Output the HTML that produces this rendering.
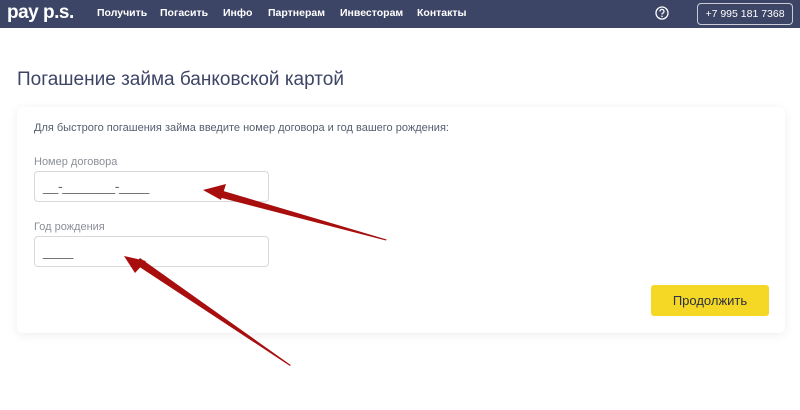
<!DOCTYPE html>
<html><head><meta charset="utf-8"><style>
body{margin:0;width:800px;height:410px;background:#fff;font-family:"Liberation Sans",sans-serif;position:relative;overflow:hidden}
.hdr{position:absolute;left:0;top:0;width:800px;height:28px;background:#3d4566}
.hdr span{position:absolute;top:7px;color:#fff;font-size:10.5px;font-weight:bold}
.logo{position:absolute;left:7px;top:2px;color:#fff;font-size:19px;font-weight:bold;letter-spacing:-0.5px}
.phone{position:absolute;left:697px;top:3px;width:94px;height:20px;border:1px solid #c9cbd6;border-radius:4px;color:#fff;font-size:10.5px;text-align:center;line-height:20px}
h1{position:absolute;left:17px;top:69px;margin:0;font-size:19px;font-weight:normal;color:#3d4566}
.card{position:absolute;left:17px;top:107px;width:768px;height:226px;background:#fff;border-radius:6px;box-shadow:0 2px 10px rgba(0,0,0,.07)}
.t{position:absolute;font-size:11px;color:#555d6e}
.l{position:absolute;font-size:11px;color:#8c8f98}
.inp{position:absolute;left:34px;width:235px;height:31px;border:1px solid #d8d8d8;border-radius:4px;color:#666;font-size:14px;line-height:28px;padding-left:8px;box-sizing:border-box;letter-spacing:-0.3px}
.btn{position:absolute;left:651px;top:285px;width:118px;height:31px;background:#f5d825;border-radius:3px;text-align:center;line-height:31px;font-size:13px;color:#2d3140}
</style></head><body>
<div class="hdr">
<div class="logo">pay p.s.</div>
<span style="left:97px">Получить</span>
<span style="left:160px">Погасить</span>
<span style="left:223px">Инфо</span>
<span style="left:268px">Партнерам</span>
<span style="left:340px">Инвесторам</span>
<span style="left:417px">Контакты</span>
<svg style="position:absolute;left:655px;top:6px" width="14" height="14" viewBox="0 0 14 14"><circle cx="7" cy="7" r="6" fill="none" stroke="#fff" stroke-width="1.3"/><path d="M5 5.5a2 2 0 1 1 2.5 1.8c-.5.2-.5.6-.5 1.2" fill="none" stroke="#fff" stroke-width="1.3"/><circle cx="7" cy="10.3" r=".8" fill="#fff"/></svg>
<div class="phone">+7 995 181 7368</div>
</div>
<h1>Погашение займа банковской картой</h1>
<div class="card"></div>
<div class="t" style="left:34px;top:122px">Для быстрого погашения займа введите номер договора и год вашего рождения:</div>
<div class="l" style="left:34px;top:156px">Номер договора</div>
<div class="inp" style="top:171px">__-_______-____</div>
<div class="l" style="left:34px;top:221px">Год рождения</div>
<div class="inp" style="top:236px">____</div>
<div class="btn">Продолжить</div>
<svg style="position:absolute;left:0;top:0" width="800" height="410">
<path d="M386,240.5 L386.6,239.5 L220,190 L218,197 Z" fill="#a80e0e"/>
<path d="M203,190 L226,184 L221,200 Z" fill="#a80e0e"/>
<path d="M290,366 L290.7,365 L140,258 L135,264 Z" fill="#a80e0e"/>
<path d="M124,256 L146,261 L135,273 Z" fill="#a80e0e"/>
</svg>
</body></html>
